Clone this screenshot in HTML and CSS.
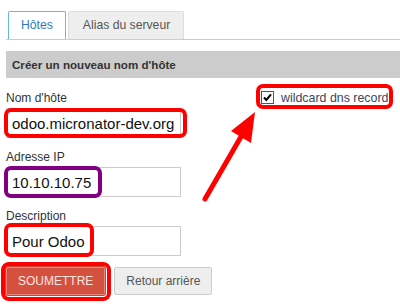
FILE: index.html
```html
<!DOCTYPE html>
<html lang="fr">
<head>
<meta charset="utf-8">
<title>Hôtes</title>
<link rel="stylesheet" href="styles.css">
</head>
<body>
<div class="page">
  <nav class="tabs">
    <a class="tab tab-active">Hôtes</a>
    <a class="tab">Alias du serveur</a>
  </nav>
  <section class="panel">
    <h2 class="panel-title">Créer un nouveau nom d'hôte</h2>
    <form class="form">
      <div class="fields">
        <div class="field">
          <label class="label">Nom d'hôte</label>
          <input class="input" type="text" value="odoo.micronator-dev.org">
        </div>
        <div class="field">
          <label class="label">Adresse IP</label>
          <input class="input" type="text" value="10.10.10.75">
        </div>
        <div class="field">
          <label class="label">Description</label>
          <input class="input" type="text" value="Pour Odoo">
        </div>
      </div>
      <div class="options">
        <label class="check">
          <span class="check-box"><svg viewBox="0 0 11 11" width="11" height="11"><path d="M2 5.5 L4.3 8 L9 2.3" fill="none" stroke="#000" stroke-width="2"/></svg></span>
          <span class="check-text">wildcard dns record</span>
        </label>
      </div>
    </form>
    <div class="actions">
      <button class="btn btn-primary" type="button">SOUMETTRE</button>
      <button class="btn" type="button">Retour arrière</button>
    </div>
  </section>
  <svg class="annotations" width="400" height="307" viewBox="0 0 400 307">
    <g fill="none" stroke-width="4">
      <rect x="6" y="110" width="179" height="26" rx="5" stroke="#ff0000"/>
      <rect x="6" y="168" width="94" height="28" rx="5" stroke="#800080"/>
      <rect x="6" y="225" width="86" height="30" rx="5" stroke="#ff0000"/>
      <rect x="3" y="264" width="106" height="35" rx="6" stroke="#ff0000"/>
      <rect x="258" y="86" width="133" height="21" rx="5" stroke="#ff0000"/>
      <line x1="205" y1="199" x2="242" y2="135" stroke="#ff0000" stroke-width="5" stroke-linecap="round"/>
    </g>
    <polygon points="255,112 231,131 251,143" fill="#ff0000"/>
  </svg>
</div>
</body>
</html>
```
FILE: styles.css
```css
* { box-sizing: border-box; }
html, body { margin: 0; padding: 0; background: #fff; }
body {
  font-family: "Liberation Sans", Arial, sans-serif;
  font-size: 12px;
  color: #333;
  width: 400px;
  height: 307px;
  overflow: hidden;
}
.page {
  position: relative;
  padding: 11px 0 0 6px;
  height: 307px;
}
.tabs {
  display: flex;
  gap: 2px;
  padding-left: 2px;
  border-bottom: 1px solid #cccccc;
}
.tab {
  height: 28px;
  line-height: 26px;
  padding: 0 12px;
  border: 1px solid #dddddd;
  border-bottom: none;
  background: #eeeeee;
  color: #555;
  font-size: 12.2px;
  border-radius: 2px 2px 0 0;
}
.tab:nth-child(2) { padding: 0 13px 0 14px; }
.tab-active {
  background: #fff;
  border-color: #63b8e4;
  color: #2d7cc0;
}
.panel { padding-top: 11px; }
.panel-title {
  margin: 0;
  height: 27px;
  line-height: 27px;
  padding-left: 6px;
  background: #cccccc;
  color: #333;
  font-size: 11.6px;
  font-weight: bold;
}
.form {
  display: flex;
  margin-top: 13px;
}
.fields {
  width: 249px;
  display: flex;
  flex-direction: column;
  gap: 12px;
}
.field { display: flex; flex-direction: column; }
.label {
  line-height: 14px;
  height: 14px;
  margin-bottom: 3px;
  color: #333;
  font-size: 12px;
}
.input {
  width: 175px;
  height: 30px;
  padding: 0 5px;
  border: 1px solid #cccccc;
  border-radius: 0;
  font-family: "Liberation Sans", Arial, sans-serif;
  font-size: 15px;
  color: #111;
  background: #fff;
  outline: none;
}
.options { padding-left: 6px; }
.check {
  display: flex;
  align-items: center;
  gap: 7px;
  height: 13px;
  line-height: 14px;
}
.check-box {
  width: 13px;
  height: 13px;
  border: 1px solid #555;
  background: #fff;
  display: flex;
  align-items: center;
  justify-content: center;
}
.check-box svg { display: block; }
.check-text { color: #3b4560; font-size: 12.4px; }
.actions {
  display: flex;
  gap: 9px;
  margin-top: 11px;
}
.btn {
  height: 28px;
  padding: 0 11px;
  border: 1px solid #cccccc;
  background: #eeeeee;
  color: #555;
  font-family: "Liberation Sans", Arial, sans-serif;
  font-size: 12px;
  border-radius: 2px;
}
.btn-primary {
  background: #d4503f;
  border-color: #e8847a;
  color: #fde6e2;
  box-shadow: 0 0 0 1px #c9483a;
}
.annotations {
  position: absolute;
  left: 0;
  top: 0;
  pointer-events: none;
}
```
